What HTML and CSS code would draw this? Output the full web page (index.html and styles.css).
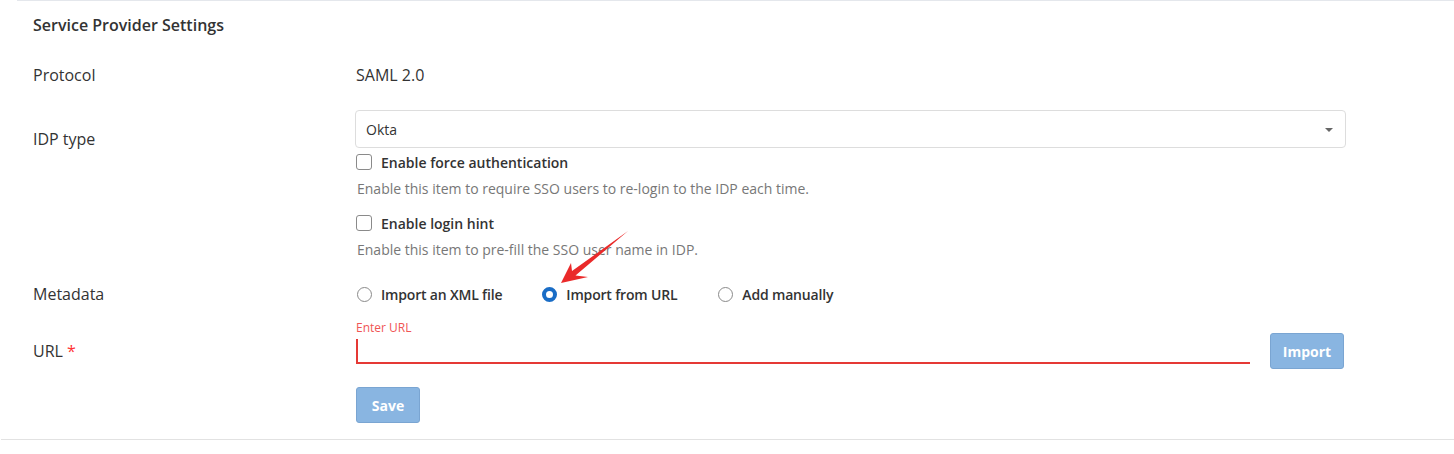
FILE: index.html
```html
<!DOCTYPE html>
<html>
<head>
<meta charset="utf-8">
<link rel="stylesheet" href="styles.css">
</head>
<body>
<div class="page">
  <div class="top-line"></div>
  <h2 class="heading">Service Provider Settings</h2>
  <div class="row row-protocol">
    <div class="label">Protocol</div>
    <div class="value">SAML 2.0</div>
  </div>
  <div class="row row-idp">
    <div class="label label-idp">IDP type</div>
    <div class="content">
      <div class="select"><span>Okta</span><span class="caret"></span></div>
      <label class="check check-1"><span class="box"></span><span class="check-text">Enable force authentication</span></label>
      <div class="desc">Enable this item to require SSO users to re-login to the IDP each time.</div>
      <label class="check check-2"><span class="box"></span><span class="check-text">Enable login hint</span></label>
      <div class="desc">Enable this item to pre-fill the SSO user name in IDP.</div>
    </div>
  </div>
  <div class="row row-meta">
    <div class="label">Metadata</div>
    <div class="radios">
      <label class="radio"><span class="dot"></span><span class="radio-text">Import an XML file</span></label>
      <label class="radio radio-2"><span class="dot dot-on"></span><span class="radio-text">Import from URL</span></label>
      <label class="radio radio-3"><span class="dot"></span><span class="radio-text">Add manually</span></label>
    </div>
  </div>
  <div class="row row-url">
    <div class="label label-url">URL <span class="req">*</span></div>
    <div class="url-content">
      <div class="url-field">
        <div class="float-label">Enter URL</div>
        <div class="url-input"></div>
      </div>
      <button class="btn btn-import">Import</button>
    </div>
  </div>
  <div class="row row-save">
    <div class="label"></div>
    <div><button class="btn btn-save">Save</button></div>
  </div>
  <div class="bottom-line"></div>
  <svg class="arrow" width="1454" height="454" viewBox="0 0 1454 454">
    <polygon points="628,231 575.5,275.5 588,277 561,283 571,263 572,271" fill="#ea2a2a"/>
  </svg>
</div>
</body>
</html>
```
FILE: styles.css
```css
* { box-sizing: border-box; }
html, body { margin: 0; padding: 0; background: #fff; }
body {
  font-family: "Open Sans", "Noto Sans", sans-serif;
  color: #333;
  width: 1454px;
  height: 454px;
  overflow: hidden;
}
.page { position: relative; height: 454px; }
.top-line { height: 1px; background: #e4e7ec; margin-left: 17px; }
.heading {
  margin: 0;
  padding: 13px 0 0 33px;
  font-size: 16px;
  font-weight: 600;
  line-height: 22px;
  height: 37px;
  color: #333;
}
.row {
  display: grid;
  grid-template-columns: 323px 990px;
  padding-left: 33px;
}
.label { font-size: 16px; line-height: 24px; color: #333; }
.value { font-size: 16px; line-height: 24px; color: #333; }
.row-protocol { margin-top: 25px; }
.row-idp { margin-top: 23px; }
.label-idp { padding-top: 17px; }
.select {
  height: 38px;
  margin-left: -1px;
  border: 1px solid #ddd;
  border-radius: 4px;
  display: flex;
  align-items: center;
  justify-content: space-between;
  padding: 0 12px 0 10px;
  font-size: 14px;
  color: #333;
}
.caret {
  width: 0; height: 0;
  border-left: 4px solid transparent;
  border-right: 4px solid transparent;
  border-top: 4px solid #666;
  margin-top: 1px;
}
.check {
  display: flex;
  align-items: center;
  height: 24px;
}
.check-1 { margin-top: 2px; }
.check-2 { margin-top: 12px; }
.box {
  width: 16px; height: 16px;
  border: 1px solid #8a8a8a;
  border-radius: 3px;
  margin-right: 9px;
  flex: none;
}
.check-text { font-size: 14px; font-weight: 600; color: #333; }
.desc {
  font-size: 14px;
  line-height: 20px;
  color: #777;
  margin-top: 5px;
  margin-left: 1px;
}
.row-meta { margin-top: 22px; }
.radios { display: flex; align-items: center; height: 24px; padding-left: 1px; }
.radio { display: flex; align-items: center; }
.radio-2 { margin-left: 40px; }
.radio-3 { margin-left: 41px; }
.dot {
  width: 15px; height: 15px;
  border: 1px solid #8a8a8a;
  border-radius: 50%;
  margin-right: 9px;
  flex: none;
}
.dot-on { border: 4.5px solid #1a6dc6; background: #fff; }
.radio-text { font-size: 14px; font-weight: 600; color: #333; letter-spacing: -0.18px; }
.row-url { margin-top: 14px; }
.label-url { padding-top: 19px; }
.req { color: #f33; }
.url-content { display: flex; align-items: flex-start; }
.url-field { width: 894px; }
.float-label { font-size: 12px; line-height: 16px; color: #f05555; height: 19px; }
.url-input {
  height: 25px;
  border-left: 2px solid #e53935;
  border-bottom: 2px solid #e53935;
}
.btn {
  font-family: "Open Sans", "Noto Sans", sans-serif;
  font-size: 14px;
  font-weight: 700;
  color: #fff;
  background: #89b5e1;
  border: 1px solid #7aa5d2;
  border-radius: 3px;
  height: 36px;
  padding: 0;
  cursor: pointer;
}
.btn-import { width: 74px; margin-left: 20px; margin-top: 13px; }
.row-save { margin-top: 18px; }
.btn-save { width: 64px; }
.bottom-line { height: 1px; background: #e2e2e2; margin-left: 1px; margin-top: 16px; }
.arrow { position: absolute; left: 0; top: 0; pointer-events: none; }
```
